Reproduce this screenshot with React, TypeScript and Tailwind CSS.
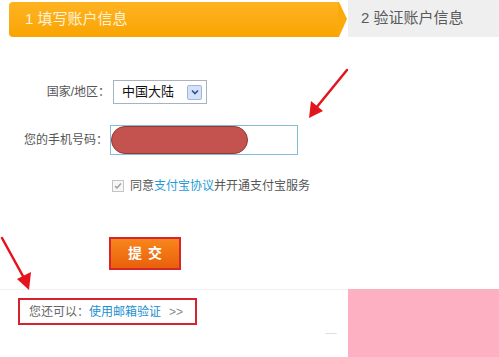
import React from 'react'

const font = { fontFamily: '"Liberation Sans", "Noto Sans CJK SC", sans-serif' }

function Arrows() {
  // annotation arrows drawn over the page
  return (
    <svg className="absolute inset-0 pointer-events-none" width="499" height="357" viewBox="0 0 499 357">
      <line x1="347" y1="70" x2="316" y2="108" stroke="#e3141c" strokeWidth="2.5" strokeLinecap="round" />
      <polygon points="309,118 311,101 323,111" fill="#e3141c" />
      <line x1="2" y1="238" x2="24" y2="278" stroke="#e3141c" strokeWidth="2.5" strokeLinecap="round" />
      <polygon points="29,290 17,279 31,272" fill="#e3141c" />
    </svg>
  )
}

export default function App() {
  return (
    <div className="relative w-[499px] h-[357px] overflow-hidden bg-white text-[12px] text-[#555]" style={font}>
      {/* 步骤条 */}
      <div className="flex h-[37px]">
        <div className="flex flex-1">
          <div className="ml-[9px] mt-[2px] flex h-[35px] w-[329px] items-center rounded-l-[4px] bg-gradient-to-b from-[#ffb320] to-[#f9a400] pl-[16px] text-[15px] text-[#fff3d6]">
            1 填写账户信息
          </div>
          <svg width="10" height="37" viewBox="0 0 10 37" className="bg-[#efefef]">
            <polygon points="0,0 10,0 10,37 0,37" fill="#ffffff" />
            <polygon points="0,2 1,2 9,19 1,37 0,37" fill="#fbaa0c" />
          </svg>
        </div>
        <div className="flex w-[151px] items-center bg-[#efefef] pl-[13px] text-[15px] text-[#5a5a5a]">
          2 验证账户信息
        </div>
      </div>

      {/* 表单 */}
      <div className="mt-[43px] flex flex-col">
        <div className="flex h-[24px] items-center">
          <div className="w-[110px] text-right">国家/地区：</div>
          <div className="ml-[3px] flex h-[24px] w-[94px] items-center justify-between border border-[#a8b3c0] bg-white pl-[8px] pr-[4px]">
            <span className="text-[13px] text-[#111]">中国大陆</span>
            <span className="flex h-[15px] w-[15px] items-center justify-center rounded-[2px] border border-[#9fb6de] bg-[#d4e1f6]">
              <svg width="8" height="6" viewBox="0 0 8 6">
                <path d="M1 1.5 L4 4.5 L7 1.5" stroke="#2a4f9e" strokeWidth="1.6" fill="none" />
              </svg>
            </span>
          </div>
        </div>

        <div className="mt-[21px] flex h-[30px] items-center">
          <div className="w-[108px] text-right">您的手机号码：</div>
          <div className="ml-[2px] h-[30px] w-[188px] border-[1.5px] border-[#86bcd8] bg-white">
            <div className="h-full w-[137px] rounded-full border-[1.5px] border-[#8e3a37] bg-[#c4524e]" />
          </div>
        </div>

        <div className="mt-[24px] flex h-[14px] items-center pl-[112px]">
          <span className="flex h-[12px] w-[12px] items-center justify-center border border-[#c4c4c4] bg-[#f7f7f7]">
            <svg width="8" height="8" viewBox="0 0 8 8">
              <path d="M1 4 L3 6 L7 1.5" stroke="#9a9a9a" strokeWidth="1.3" fill="none" />
            </svg>
          </span>
          <span className="ml-[6px]">
            同意<span className="text-[#1f9ad6]">支付宝协议</span>并开通支付宝服务
          </span>
        </div>

        <div className="mt-[44px] pl-[109px]">
          <button className="flex h-[33px] w-[72px] items-center justify-center border-[2.5px] border-[#d6262b] bg-gradient-to-b from-[#f7861c] to-[#e9600a] text-[14px] font-bold tracking-[6px] text-white">
            <span className="pl-[6px]">提交</span>
          </button>
        </div>
      </div>

      {/* 底部 */}
      <div className="mt-[19px] flex h-[68px]">
        <div className="flex-1 border-t border-[#f0f0f0] pl-[18px] pt-[8px]">
          <div className="flex h-[27px] w-[179px] items-center border-2 border-[#d3232f] pl-[9px] text-[#666]">
            您还可以：<span className="text-[#1b8fd0]">使用邮箱验证</span>
            <span className="ml-[8px] text-[#888]">&gt;&gt;</span>
          </div>
          <div className="ml-[307px] mt-[1px] text-[#ddd]">一</div>
        </div>
        <div className="w-[151px] bg-[#feb0c3]" />
      </div>

      <Arrows />
    </div>
  )
}
